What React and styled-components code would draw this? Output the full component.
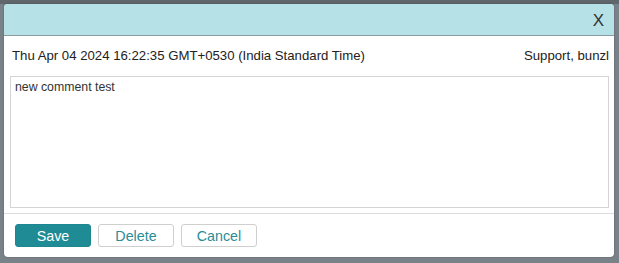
import React from "react";
import styled, { createGlobalStyle } from "styled-components";

const Global = createGlobalStyle`
  html, body { margin: 0; padding: 0; }
  body {
    background: #737b82;
    font-family: "Liberation Sans", Arial, sans-serif;
    width: 619px;
    height: 263px;
    overflow: hidden;
  }
`;

const Page = styled.div`
  padding: 4px 5px 6px 4px;
  box-sizing: border-box;
  height: 263px;
  background: linear-gradient(#5f666c 0, #5f666c 4px, #7a8289 4px);
`;

const Dialog = styled.div`
  width: 610px;
  height: 253px;
  background: #fff;
  border-radius: 4px;
  overflow: hidden;
  display: flex;
  flex-direction: column;
  box-shadow: 0 0 2px rgba(0,0,0,0.3);
`;

const Header = styled.div`
  height: 31px;
  background: #b6e1e7;
  border-bottom: 1px solid #8d9aa0;
  display: flex;
  align-items: center;
  justify-content: flex-end;
  padding-right: 10px;
`;

const Close = styled.span`
  font-size: 17px;
  color: #333;
  line-height: 1;
  margin-top: 2px;
`;

const InfoRow = styled.div`
  display: flex;
  justify-content: space-between;
  align-items: center;
  height: 38px;
  padding: 0 5px 2px 8px;
  font-size: 13.2px;
  color: #222;
`;

const Body = styled.div`
  padding: 0 5px 0 6px;
`;

const TextArea = styled.div`
  border: 1px solid #d4d4d4;
  padding: 3px 4px;
  font-size: 12.3px;
  color: #333;
  box-sizing: border-box;
  height: 132px;
`;

const Divider = styled.div`
  margin-top: 5px;
  border-top: 1px solid #dcdcdc;
`;

const Footer = styled.div`
  display: flex;
  gap: 7px;
  padding: 10px 11px;
`;

const Button = styled.button`
  width: 76px;
  height: 23px;
  border-radius: 3px;
  font-family: "Liberation Sans", Arial, sans-serif;
  font-size: 14.3px;
  cursor: pointer;
  padding: 0;
  border: 1px solid ${p => (p.$primary ? "#1d8791" : "#cfcfcf")};
  background: ${p => (p.$primary ? "#1f8b95" : "#fff")};
  color: ${p => (p.$primary ? "#fff" : "#2b8c96")};
`;

export default function App() {
  return (
    <>
      <Global />
      <Page>
        <Dialog>
          <Header>
            <Close>X</Close>
          </Header>
          <InfoRow>
            <span>Thu Apr 04 2024 16:22:35 GMT+0530 (India Standard Time)</span>
            <span>Support, bunzl</span>
          </InfoRow>
          <Body>
            <TextArea>new comment test</TextArea>
          </Body>
          <Divider />
          <Footer>
            <Button $primary>Save</Button>
            <Button>Delete</Button>
            <Button>Cancel</Button>
          </Footer>
        </Dialog>
      </Page>
    </>
  );
}
